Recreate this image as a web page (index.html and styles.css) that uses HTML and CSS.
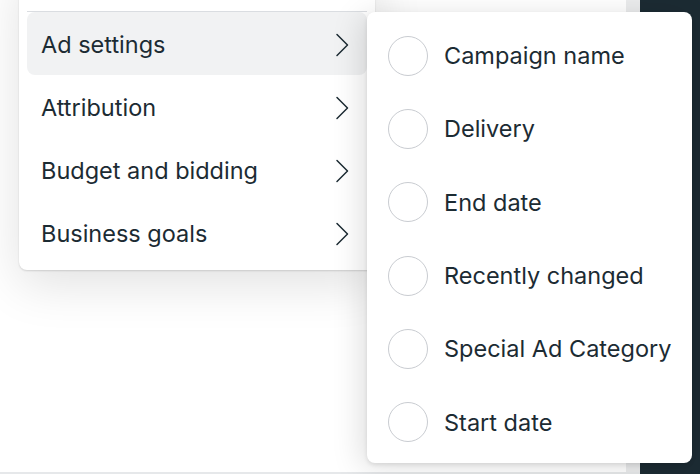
FILE: index.html
```html
<!DOCTYPE html>
<html lang="en">
<head>
<meta charset="UTF-8">
<title>Columns menu</title>
<meta name="viewport" content="width=device-width,initial-scale=1">
<link rel="stylesheet" href="styles.css">
</head>
<body>

<div class="screen">
  <!-- page behind the menus -->
  <div class="surface">
    <div class="surface-body"></div>
    <div class="scroll-track"></div>
  </div>
  <div class="dark-rail"></div>

  <!-- category menu -->
  <div class="menu">
    <div class="menu-cut"></div>
    <div class="menu-sep"></div>
    <div class="menu-row active">
      <span>Ad settings</span>
      <svg class="chev" viewBox="0 0 14 24" width="14" height="24"><path d="M2 1.5 L12.5 12 L2 22.5"/></svg>
    </div>
    <div class="menu-row">
      <span>Attribution</span>
      <svg class="chev" viewBox="0 0 14 24" width="14" height="24"><path d="M2 1.5 L12.5 12 L2 22.5"/></svg>
    </div>
    <div class="menu-row">
      <span>Budget and bidding</span>
      <svg class="chev" viewBox="0 0 14 24" width="14" height="24"><path d="M2 1.5 L12.5 12 L2 22.5"/></svg>
    </div>
    <div class="menu-row">
      <span>Business goals</span>
      <svg class="chev" viewBox="0 0 14 24" width="14" height="24"><path d="M2 1.5 L12.5 12 L2 22.5"/></svg>
    </div>
  </div>

  <!-- submenu with radio options -->
  <div class="submenu">
    <label class="opt"><span class="radio"></span>Campaign name</label>
    <label class="opt"><span class="radio"></span>Delivery</label>
    <label class="opt"><span class="radio"></span>End date</label>
    <label class="opt"><span class="radio"></span>Recently changed</label>
    <label class="opt"><span class="radio"></span>Special Ad Category</label>
    <label class="opt"><span class="radio"></span>Start date</label>
  </div>
</div>

</body>
</html>
```

FILE: styles.css
```css
:root{
  --text:#1c2b33;
  --line:#dadde1;
  --hover:#f1f2f3;
  --dark:#1c2b33;
  --radius:8px;
}
html,body{margin:0; padding:0;}
body{
  font-family:Inter, "Noto Sans", sans-serif;
  color:var(--text);
  background:#fff;
}
.screen{
  position:relative;
  width:700px; height:474px;
  overflow:hidden;
  display:flex;
}
.surface{
  flex:1;
  display:flex;
  background:#fff;
  border-bottom:2px solid #e6e8ea;
  height:472px;
}
.surface-body{flex:1;}
.scroll-track{width:14px; background:#ebeced;}
.dark-rail{width:60px; background:var(--dark);}

/* left menu */
.menu{
  position:absolute;
  left:19px; top:-32px;
  width:356px;
  padding:0 8px 6px;
  box-sizing:border-box;
  background:#fff;
  border-radius:var(--radius);
  box-shadow:0 1px 2px rgba(0,0,0,.14), 0 14px 50px rgba(0,0,0,.12);
}
.menu-cut{height:43px;}
.menu-sep{height:1px; background:var(--line);}
.menu-row{
  height:63px;
  box-sizing:border-box;
  padding:2px 18px 0 14px;
  display:flex; align-items:center; justify-content:space-between;
  border-radius:var(--radius);
  font-size:23.5px;
}
.menu-row.active{background:var(--hover);}
.chev{fill:none; stroke:var(--text); stroke-width:1.5; stroke-linecap:round; stroke-linejoin:round;}

/* submenu */
.submenu{
  position:absolute;
  left:367px; top:12px;
  width:325px; height:451px;
  padding:7px 0 4px;
  box-sizing:border-box;
  background:#fff;
  border-radius:var(--radius);
  box-shadow:0 2px 4px rgba(0,0,0,.1), -6px 4px 30px rgba(0,0,0,.13);
  display:flex; flex-direction:column;
}
.opt{
  flex:1;
  display:flex; align-items:center;
  gap:16px;
  padding-left:21px;
  font-size:23.5px;
}
.radio{
  width:40px; height:40px;
  box-sizing:border-box;
  border:1.5px solid #c9ccd1;
  border-radius:50%;
}
```
